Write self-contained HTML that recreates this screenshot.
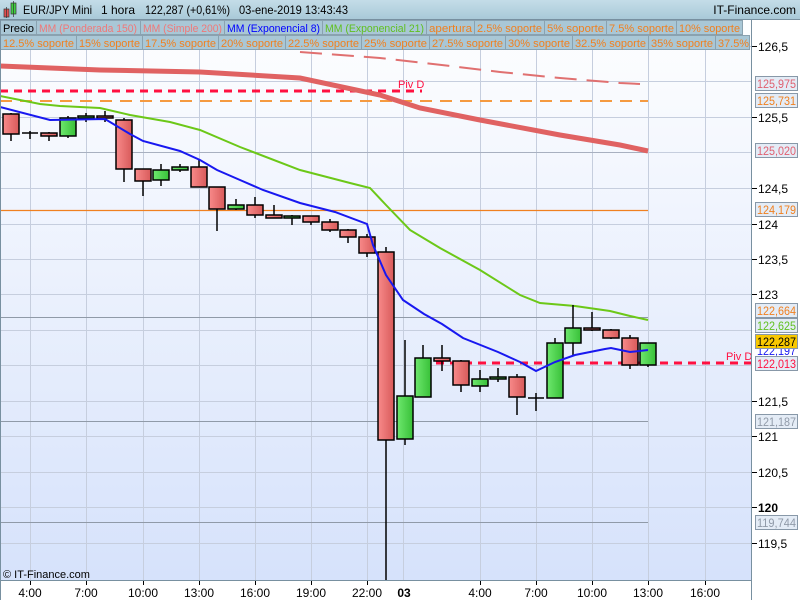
<!DOCTYPE html>
<html><head><meta charset="utf-8"><style>
html,body{margin:0;padding:0;width:800px;height:600px;overflow:hidden;background:#fff;font-family:"Liberation Sans",sans-serif}
svg{display:block}
text{font-family:"Liberation Sans",sans-serif}
</style></head><body>
<svg width="800" height="600" viewBox="0 0 800 600" xmlns="http://www.w3.org/2000/svg">
<defs>
<linearGradient id="bg" x1="0" y1="0" x2="0" y2="1"><stop offset="0" stop-color="#ffffff"/><stop offset="1" stop-color="#d6e2fb"/></linearGradient>
<linearGradient id="hd" x1="0" y1="0" x2="0" y2="1"><stop offset="0" stop-color="#c4dde8"/><stop offset="1" stop-color="#a9c9d8"/></linearGradient>
<linearGradient id="rd" x1="0" y1="0" x2="1" y2="0"><stop offset="0" stop-color="#f88a8a"/><stop offset="1" stop-color="#d85a5a"/></linearGradient>
<linearGradient id="gr" x1="0" y1="0" x2="1" y2="0"><stop offset="0" stop-color="#6ee86e"/><stop offset="1" stop-color="#38c038"/></linearGradient>
</defs>
<rect x="0" y="0" width="751" height="580" fill="url(#bg)"/>
<rect x="751" y="0" width="49" height="580" fill="#fff"/>
<g stroke="#c6cede" stroke-width="1">
<line x1="0" y1="46.5" x2="751" y2="46.5"/><line x1="0" y1="81.5" x2="751" y2="81.5"/><line x1="0" y1="117.5" x2="751" y2="117.5"/><line x1="0" y1="152.5" x2="751" y2="152.5"/><line x1="0" y1="188.5" x2="751" y2="188.5"/><line x1="0" y1="224.5" x2="751" y2="224.5"/><line x1="0" y1="259.5" x2="751" y2="259.5"/><line x1="0" y1="294.5" x2="751" y2="294.5"/><line x1="0" y1="330.5" x2="751" y2="330.5"/><line x1="0" y1="365.5" x2="751" y2="365.5"/><line x1="0" y1="401.5" x2="751" y2="401.5"/><line x1="0" y1="436.5" x2="751" y2="436.5"/><line x1="0" y1="472.5" x2="751" y2="472.5"/><line x1="0" y1="507.5" x2="751" y2="507.5"/><line x1="0" y1="543.5" x2="751" y2="543.5"/>
<line x1="30.5" y1="50" x2="30.5" y2="580"/><line x1="86.5" y1="50" x2="86.5" y2="580"/><line x1="143.5" y1="50" x2="143.5" y2="580"/><line x1="199.5" y1="50" x2="199.5" y2="580"/><line x1="255.5" y1="50" x2="255.5" y2="580"/><line x1="311.5" y1="50" x2="311.5" y2="580"/><line x1="367.5" y1="50" x2="367.5" y2="580"/><line x1="403.5" y1="50" x2="403.5" y2="580"/><line x1="480.5" y1="50" x2="480.5" y2="580"/><line x1="536.5" y1="50" x2="536.5" y2="580"/><line x1="592.5" y1="50" x2="592.5" y2="580"/><line x1="648.5" y1="50" x2="648.5" y2="580"/><line x1="705.5" y1="50" x2="705.5" y2="580"/>
</g>
<line x1="0" y1="152.5" x2="648" y2="152.5" stroke="#a8b0c0"/>
<line x1="0" y1="317.5" x2="648" y2="317.5" stroke="#909aa8"/>
<line x1="0" y1="421.5" x2="648" y2="421.5" stroke="#909aa8"/>
<line x1="0" y1="522.5" x2="648" y2="522.5" stroke="#909aa8"/>
<line x1="0" y1="210.5" x2="648" y2="210.5" stroke="#f08020" stroke-width="1.2"/>
<line x1="0" y1="101" x2="648" y2="101" stroke="#f59a40" stroke-width="2" stroke-dasharray="12,8"/>
<line x1="0" y1="91" x2="422" y2="91" stroke="#ff1040" stroke-width="3" stroke-dasharray="8,6"/>
<text x="398" y="88" font-size="11" fill="#ff1040">Piv D</text>
<line x1="422" y1="363" x2="751" y2="363" stroke="#ff1040" stroke-width="3" stroke-dasharray="8,6"/>
<text x="726" y="360" font-size="11" fill="#ff1040">Piv D</text>
<polyline fill="none" stroke="#e07070" stroke-width="2" stroke-dasharray="22,10" points="300,52 380,58 450,66 500,72 560,78 620,83 640,84"/>
<polyline fill="none" stroke="#e06262" stroke-width="5" points="0,66 100,70 200,72 300,78 380,95 420,108 480,120 560,135 620,145 648,151"/>
<polyline fill="none" stroke="#6cc818" stroke-width="2" points="0,96 40,104 60,106 100,108 130,115 170,122 200,130 240,147 300,170 350,183 370,188 386,205 410,230 440,248 480,270 520,295 540,303 575,306 610,311 630,316 648,320"/>
<g stroke="#000" stroke-width="1.5">
<line x1="11" y1="113" x2="11" y2="141"/><rect x="3" y="114" width="16" height="20" fill="url(#rd)"/>
<line x1="30" y1="131" x2="30" y2="139"/><line x1="22" y1="133" x2="38" y2="133"/>
<line x1="49" y1="132" x2="49" y2="141"/><rect x="41" y="133" width="16" height="3" fill="url(#rd)"/>
<line x1="68" y1="116" x2="68" y2="138"/><rect x="60" y="118" width="16" height="18" fill="url(#gr)"/>
<line x1="86" y1="113" x2="86" y2="122"/><rect x="78" y="116" width="16" height="2" fill="url(#gr)"/>
<line x1="105" y1="111" x2="105" y2="122"/><rect x="97" y="116" width="16" height="2" fill="url(#rd)"/>
<line x1="124" y1="118" x2="124" y2="182"/><rect x="116" y="120" width="16" height="49" fill="url(#rd)"/>
<line x1="143" y1="169" x2="143" y2="196"/><rect x="135" y="169" width="16" height="12" fill="url(#rd)"/>
<line x1="161" y1="164" x2="161" y2="186"/><rect x="153" y="170" width="16" height="10" fill="url(#gr)"/>
<line x1="180" y1="164" x2="180" y2="172"/><rect x="172" y="167" width="16" height="3" fill="url(#gr)"/>
<line x1="199" y1="160" x2="199" y2="187"/><rect x="191" y="167" width="16" height="20" fill="url(#rd)"/>
<line x1="217" y1="187" x2="217" y2="231"/><rect x="209" y="187" width="16" height="22" fill="url(#rd)"/>
<line x1="236" y1="199" x2="236" y2="210"/><rect x="228" y="205" width="16" height="4" fill="url(#gr)"/>
<line x1="255" y1="197" x2="255" y2="218"/><rect x="247" y="205" width="16" height="10" fill="url(#rd)"/>
<line x1="274" y1="205" x2="274" y2="218"/><rect x="266" y="215" width="16" height="3" fill="url(#rd)"/>
<line x1="292" y1="215" x2="292" y2="225"/><rect x="284" y="216" width="16" height="2" fill="url(#gr)"/>
<line x1="311" y1="216" x2="311" y2="225"/><rect x="303" y="216" width="16" height="6" fill="url(#rd)"/>
<line x1="330" y1="219" x2="330" y2="232"/><rect x="322" y="222" width="16" height="8" fill="url(#rd)"/>
<line x1="348" y1="229" x2="348" y2="243"/><rect x="340" y="230" width="16" height="7" fill="url(#rd)"/>
<line x1="367" y1="234" x2="367" y2="257"/><rect x="359" y="237" width="16" height="16" fill="url(#rd)"/>
<line x1="386" y1="247" x2="386" y2="580"/><rect x="378" y="252" width="16" height="188" fill="url(#rd)"/>
<line x1="405" y1="340" x2="405" y2="445"/><rect x="397" y="396" width="16" height="43" fill="url(#gr)"/>
<line x1="423" y1="345" x2="423" y2="397"/><rect x="415" y="358" width="16" height="39" fill="url(#gr)"/>
<line x1="442" y1="345" x2="442" y2="371"/><rect x="434" y="358" width="16" height="3" fill="url(#rd)"/>
<line x1="461" y1="360" x2="461" y2="392"/><rect x="453" y="361" width="16" height="24" fill="url(#rd)"/>
<line x1="480" y1="370" x2="480" y2="392"/><rect x="472" y="379" width="16" height="7" fill="url(#gr)"/>
<line x1="498" y1="368" x2="498" y2="382"/><rect x="490" y="377" width="16" height="2" fill="url(#gr)"/>
<line x1="517" y1="374" x2="517" y2="415"/><rect x="509" y="377" width="16" height="20" fill="url(#rd)"/>
<line x1="536" y1="393" x2="536" y2="411"/><line x1="528" y1="398" x2="544" y2="398"/>
<line x1="555" y1="338" x2="555" y2="398"/><rect x="547" y="343" width="16" height="55" fill="url(#gr)"/>
<line x1="573" y1="305" x2="573" y2="355"/><rect x="565" y="328" width="16" height="15" fill="url(#gr)"/>
<line x1="592" y1="312" x2="592" y2="331"/><rect x="584" y="328" width="16" height="2" fill="url(#rd)"/>
<line x1="611" y1="329" x2="611" y2="339"/><rect x="603" y="330" width="16" height="8" fill="url(#rd)"/>
<line x1="630" y1="335" x2="630" y2="369"/><rect x="622" y="338" width="16" height="27" fill="url(#rd)"/>
<line x1="648" y1="343" x2="648" y2="367"/><rect x="640" y="343" width="16" height="22" fill="url(#gr)"/>
</g>
<polyline fill="none" stroke="#1818f0" stroke-width="2" points="0,107 50,120 105,119 130,134 143,141 180,151 200,160 217,170 240,180 263,190 300,203 335,212 367,224 373,245 386,275 403,300 424,314 442,324 463,338 498,352 520,362 536,371 555,362 575,355 605,349 611,348 630,352 648,350"/>
<rect x="0" y="0" width="800" height="19" fill="url(#hd)"/>
<line x1="0" y1="19.5" x2="800" y2="19.5" stroke="#7890a0"/>
<rect x="4" y="9" width="5" height="8" fill="#e05050" stroke="#333" stroke-width=".7"/><line x1="6.5" y1="7" x2="6.5" y2="18" stroke="#333" stroke-width=".7"/>
<rect x="11" y="3" width="5" height="11" fill="#40d040" stroke="#333" stroke-width=".7"/><line x1="13.5" y1="1" x2="13.5" y2="17" stroke="#333" stroke-width=".7"/>
<g font-size="12" fill="#000">
<text x="23" y="14" textLength="69" lengthAdjust="spacingAndGlyphs">EUR/JPY Mini</text>
<text x="101" y="14" textLength="34" lengthAdjust="spacingAndGlyphs">1 hora</text>
<text x="145" y="14" textLength="85" lengthAdjust="spacingAndGlyphs">122,287 (+0,61%)</text>
<text x="239" y="14" textLength="109" lengthAdjust="spacingAndGlyphs">03-ene-2019 13:43:43</text>
<text x="796" y="14" text-anchor="end">IT-Finance.com</text>
</g>
<g font-size="11">
<rect x="0" y="20" width="742" height="15" fill="#a9c7d6"/>
<rect x="0" y="35" width="750" height="15" fill="#a9c7d6"/>
<g stroke="#8aa2b0" fill="none">
<rect x="0.5" y="20.5" width="36" height="14"/><rect x="36.5" y="20.5" width="104" height="14"/><rect x="140.5" y="20.5" width="84" height="14"/><rect x="224.5" y="20.5" width="98" height="14"/><rect x="322.5" y="20.5" width="104" height="14"/><rect x="426.5" y="20.5" width="48" height="14"/><rect x="474.5" y="20.5" width="70" height="14"/><rect x="544.5" y="20.5" width="62" height="14"/><rect x="606.5" y="20.5" width="70" height="14"/><rect x="676.5" y="20.5" width="66" height="14"/>
<rect x="0.5" y="35.5" width="76" height="14"/><rect x="76.5" y="35.5" width="66" height="14"/><rect x="142.5" y="35.5" width="76" height="14"/><rect x="218.5" y="35.5" width="67" height="14"/><rect x="285.5" y="35.5" width="76" height="14"/><rect x="361.5" y="35.5" width="68" height="14"/><rect x="429.5" y="35.5" width="76" height="14"/><rect x="505.5" y="35.5" width="67" height="14"/><rect x="572.5" y="35.5" width="76" height="14"/><rect x="648.5" y="35.5" width="67" height="14"/><rect x="715.5" y="35.5" width="34" height="14"/>
</g>
<text x="3" y="32" fill="#000" textLength="31" lengthAdjust="spacingAndGlyphs">Precio</text>
<text x="39" y="32" fill="#f07878" textLength="98" lengthAdjust="spacingAndGlyphs">MM (Ponderada 150)</text>
<text x="143" y="32" fill="#f07878" textLength="79" lengthAdjust="spacingAndGlyphs">MM (Simple 200)</text>
<text x="227" y="32" fill="#0000ff" textLength="93" lengthAdjust="spacingAndGlyphs">MM (Exponencial 8)</text>
<text x="325" y="32" fill="#60c020" textLength="99" lengthAdjust="spacingAndGlyphs">MM (Exponencial 21)</text>
<text x="429" y="32" fill="#f08020" textLength="43" lengthAdjust="spacingAndGlyphs">apertura</text>
<text x="477" y="32" fill="#f08020" textLength="65" lengthAdjust="spacingAndGlyphs">2.5% soporte</text>
<text x="547" y="32" fill="#f08020" textLength="57" lengthAdjust="spacingAndGlyphs">5% soporte</text>
<text x="609" y="32" fill="#f08020" textLength="65" lengthAdjust="spacingAndGlyphs">7.5% soporte</text>
<text x="679" y="32" fill="#f08020" textLength="61" lengthAdjust="spacingAndGlyphs">10% soporte</text>
<text x="3" y="47" fill="#f08020" textLength="71" lengthAdjust="spacingAndGlyphs">12.5% soporte</text>
<text x="79" y="47" fill="#f08020" textLength="61" lengthAdjust="spacingAndGlyphs">15% soporte</text>
<text x="145" y="47" fill="#f08020" textLength="71" lengthAdjust="spacingAndGlyphs">17.5% soporte</text>
<text x="221" y="47" fill="#f08020" textLength="62" lengthAdjust="spacingAndGlyphs">20% soporte</text>
<text x="288" y="47" fill="#f08020" textLength="71" lengthAdjust="spacingAndGlyphs">22.5% soporte</text>
<text x="364" y="47" fill="#f08020" textLength="63" lengthAdjust="spacingAndGlyphs">25% soporte</text>
<text x="432" y="47" fill="#f08020" textLength="71" lengthAdjust="spacingAndGlyphs">27.5% soporte</text>
<text x="508" y="47" fill="#f08020" textLength="62" lengthAdjust="spacingAndGlyphs">30% soporte</text>
<text x="575" y="47" fill="#f08020" textLength="71" lengthAdjust="spacingAndGlyphs">32.5% soporte</text>
<text x="651" y="47" fill="#f08020" textLength="62" lengthAdjust="spacingAndGlyphs">35% soporte</text>
<text x="718" y="47" fill="#f08020" textLength="31" lengthAdjust="spacingAndGlyphs">37.5%</text>
</g>
<line x1="751.5" y1="20" x2="751.5" y2="600" stroke="#7890a0"/>
<g font-size="12" fill="#000">
<line x1="752" y1="46.5" x2="757" y2="46.5" stroke="#000"/><text x="758" y="51">126,5</text>
<line x1="752" y1="117.5" x2="757" y2="117.5" stroke="#000"/><text x="758" y="122">125,5</text>
<line x1="752" y1="188.5" x2="757" y2="188.5" stroke="#000"/><text x="758" y="193">124,5</text>
<line x1="752" y1="224.5" x2="757" y2="224.5" stroke="#000"/><text x="758" y="229">124</text>
<line x1="752" y1="259.5" x2="757" y2="259.5" stroke="#000"/><text x="758" y="264">123,5</text>
<line x1="752" y1="294.5" x2="757" y2="294.5" stroke="#000"/><text x="758" y="299">123</text>
<line x1="752" y1="401.5" x2="757" y2="401.5" stroke="#000"/><text x="758" y="406">121,5</text>
<line x1="752" y1="436.5" x2="757" y2="436.5" stroke="#000"/><text x="758" y="441">121</text>
<line x1="752" y1="472.5" x2="757" y2="472.5" stroke="#000"/><text x="758" y="477">120,5</text>
<line x1="752" y1="507.5" x2="757" y2="507.5" stroke="#000"/><text x="758" y="512" font-weight="bold">120</text>
<line x1="752" y1="543.5" x2="757" y2="543.5" stroke="#000"/><text x="758" y="548">119,5</text>
</g>
<g font-size="11.5" stroke-width="1">
<rect x="755.5" y="76.5" width="42" height="14" fill="#e4ecf6" stroke="#8898a8"/><text x="757" y="88" fill="#e06070" textLength="39" lengthAdjust="spacingAndGlyphs">125,975</text>
<rect x="755.5" y="93.5" width="42" height="14" fill="#e4ecf6" stroke="#8898a8"/><text x="757" y="105" fill="#f08020" textLength="39" lengthAdjust="spacingAndGlyphs">125,731</text>
<rect x="755.5" y="143.5" width="42" height="14" fill="#e4ecf6" stroke="#8898a8"/><text x="757" y="155" fill="#e06070" textLength="39" lengthAdjust="spacingAndGlyphs">125,020</text>
<rect x="755.5" y="202.5" width="42" height="14" fill="#e4ecf6" stroke="#8898a8"/><text x="757" y="214" fill="#f08020" textLength="39" lengthAdjust="spacingAndGlyphs">124,179</text>
<rect x="755.5" y="303.5" width="42" height="14" fill="#e4ecf6" stroke="#8898a8"/><text x="757" y="315" fill="#f08020" textLength="39" lengthAdjust="spacingAndGlyphs">122,664</text>
<rect x="755.5" y="318.5" width="42" height="14" fill="#e4ecf6" stroke="#8898a8"/><text x="757" y="330" fill="#60c020" textLength="39" lengthAdjust="spacingAndGlyphs">122,625</text>
<text x="757" y="355" fill="#1818f0" textLength="39" lengthAdjust="spacingAndGlyphs">122,197</text>
<rect x="755.5" y="334.5" width="42" height="14" fill="#f8c800" stroke="#8898a8"/><text x="757" y="346" fill="#000" textLength="39" lengthAdjust="spacingAndGlyphs">122,287</text>
<rect x="755.5" y="356.5" width="42" height="14" fill="#e4ecf6" stroke="#8898a8"/><text x="757" y="368" fill="#ff1040" textLength="39" lengthAdjust="spacingAndGlyphs">122,013</text>
<rect x="755.5" y="414.5" width="42" height="14" fill="#e4ecf6" stroke="#8898a8"/><text x="757" y="426" fill="#909aa8" textLength="39" lengthAdjust="spacingAndGlyphs">121,187</text>
<rect x="755.5" y="515.5" width="42" height="14" fill="#e4ecf6" stroke="#8898a8"/><text x="757" y="527" fill="#909aa8" textLength="39" lengthAdjust="spacingAndGlyphs">119,744</text>
</g>
<rect x="0" y="580" width="751" height="20" fill="#fff"/>
<line x1="0" y1="580.5" x2="751" y2="580.5" stroke="#7890a0"/>
<line x1="0.5" y1="20" x2="0.5" y2="600" stroke="#7890a0"/>
<text x="3" y="578" font-size="11" fill="#000">© IT-Finance.com</text>
<g font-size="12" fill="#000" text-anchor="middle">
<text x="30" y="597">4:00</text><text x="86" y="597">7:00</text><text x="143" y="597">10:00</text><text x="199" y="597">13:00</text><text x="255" y="597">16:00</text><text x="311" y="597">19:00</text><text x="367" y="597">22:00</text><text x="404" y="597" font-weight="bold">03</text><text x="480" y="597">4:00</text><text x="536" y="597">7:00</text><text x="592" y="597">10:00</text><text x="648" y="597">13:00</text><text x="705" y="597">16:00</text>
</g>
<g stroke="#000"><line x1="30.5" y1="581" x2="30.5" y2="585"/><line x1="86.5" y1="581" x2="86.5" y2="585"/><line x1="143.5" y1="581" x2="143.5" y2="585"/><line x1="199.5" y1="581" x2="199.5" y2="585"/><line x1="255.5" y1="581" x2="255.5" y2="585"/><line x1="311.5" y1="581" x2="311.5" y2="585"/><line x1="367.5" y1="581" x2="367.5" y2="585"/><line x1="480.5" y1="581" x2="480.5" y2="585"/><line x1="536.5" y1="581" x2="536.5" y2="585"/><line x1="592.5" y1="581" x2="592.5" y2="585"/><line x1="648.5" y1="581" x2="648.5" y2="585"/><line x1="705.5" y1="581" x2="705.5" y2="585"/></g>
</svg>
</body></html>
